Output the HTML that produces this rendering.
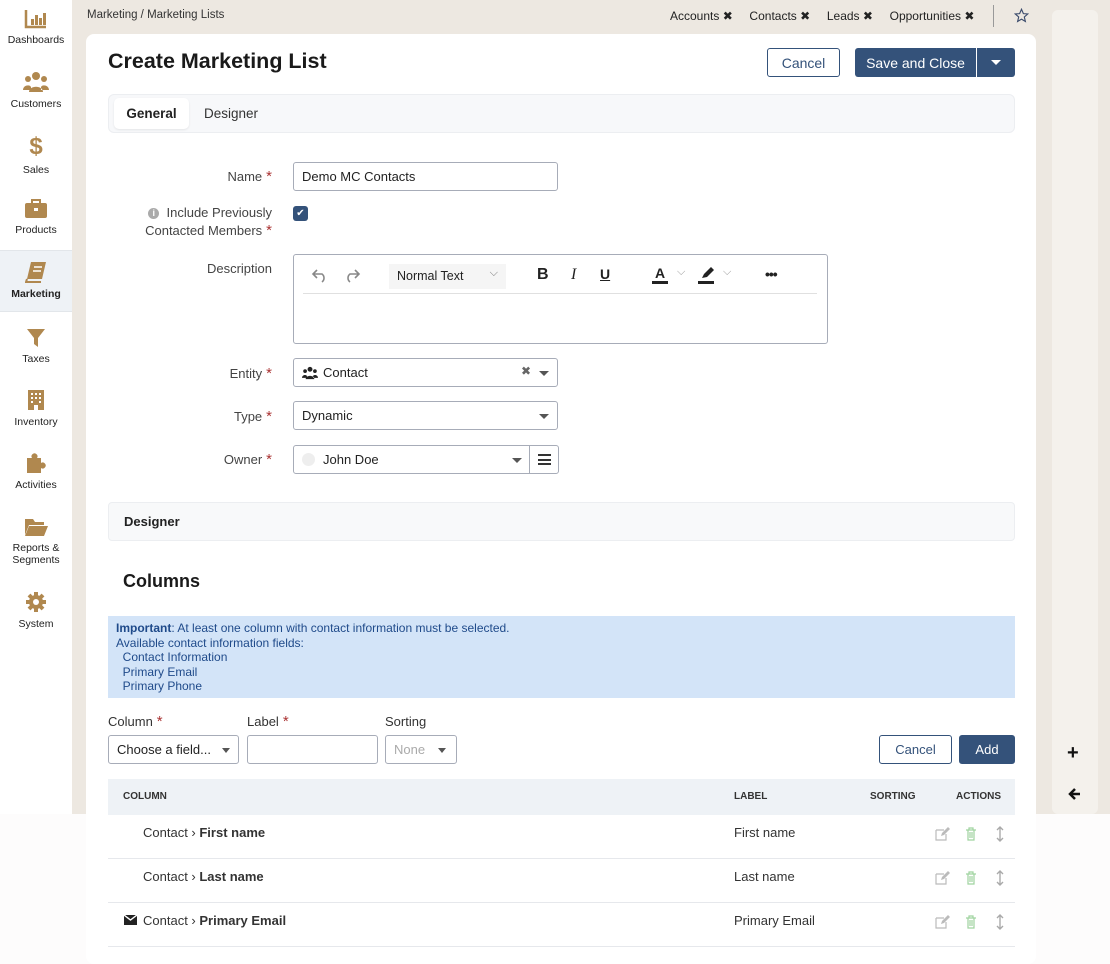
<!DOCTYPE html>
<html><head><meta charset="utf-8">
<style>
*{box-sizing:border-box;margin:0;padding:0}
body{width:1110px;height:949px;background:#fdfcfc;font-family:"Liberation Sans",sans-serif;color:#333;position:relative;overflow:hidden;font-size:13px}
.abs{position:absolute}
#bg{left:0;top:0;width:1110px;height:814px;background:#ede8e1}
#side{left:0;top:0;width:72px;height:814px;background:#fff}
.nav{position:absolute;left:0;width:72px;text-align:center;font-size:10.5px;color:#222}
.nav svg{display:block;margin:0 auto 5px}
#card{left:86px;top:34px;width:950px;height:930px;background:#fff;border-radius:8px}
#rp{left:1052px;top:10px;width:46px;height:804px;background:#f4f1ec;border-radius:6px}
.lbl{position:absolute;text-align:right;font-size:13px;color:#444;width:190px}
.req{color:#a33;font-size:15px;margin-left:4px}
.inp{position:absolute;border:1px solid #a7acb8;border-radius:3px;background:#fff;font-size:13px;color:#222;padding-left:8px;display:flex;align-items:center}
.caret{position:absolute;width:0;height:0;border-left:5px solid transparent;border-right:5px solid transparent;border-top:5px solid #555}
.btn{position:absolute;border-radius:3px;display:flex;align-items:center;justify-content:center;font-size:14px}
.th{position:absolute;font-size:10px;font-weight:bold;color:#333}
.row{position:absolute;left:108px;width:907px;height:44px;border-bottom:1px solid #e6e8ec;font-size:13px}
</style></head><body>
<div id="bg" class="abs"></div>
<div id="side" class="abs"></div>
<div class="abs" style="left:0;top:250px;width:72px;height:62px;background:#eef2f6;border-top:1px solid #e2e6ea;border-bottom:1px solid #e2e6ea"></div>

<div class="nav" style="top:9px"><svg width="24" height="20" viewBox="0 0 24 20"><path d="M2 1v17h20" stroke="#b0884f" stroke-width="2.5" fill="none"/><rect x="7" y="10" width="3" height="6" fill="#b0884f"/><rect x="11" y="6" width="3" height="10" fill="#b0884f"/><rect x="15" y="9" width="3" height="7" fill="#b0884f"/><rect x="19" y="4" width="3" height="12" fill="#b0884f"/></svg>Dashboards</div>
<div class="nav" style="top:71px"><svg width="26" height="22" viewBox="0 0 26 22"><circle cx="13" cy="5" r="4" fill="#b0884f"/><circle cx="5" cy="8" r="3" fill="#b0884f"/><circle cx="21" cy="8" r="3" fill="#b0884f"/><path d="M6 21c0-7 14-7 14 0zM0 19c0-5 7-6 8-3v3zM26 19c0-5-7-6-8-3v3z" fill="#b0884f"/></svg>Customers</div>
<div class="nav" style="top:135px"><div style="font-size:24px;font-weight:bold;color:#b0884f;line-height:24px;margin-bottom:5px">$</div>Sales</div>
<div class="nav" style="top:199px"><svg width="24" height="20" viewBox="0 0 24 20"><rect x="1" y="4" width="22" height="15" rx="2" fill="#b0884f"/><rect x="8" y="1" width="8" height="4" fill="none" stroke="#b0884f" stroke-width="2"/><rect x="10" y="9" width="4" height="3" fill="#fff"/></svg>Products</div>
<div class="nav" style="top:261px;font-weight:bold"><svg width="22" height="22" viewBox="0 0 22 22"><path d="M6 1h15l-4 17H2z" fill="#b0884f"/><path d="M2 18l-1 3h15" stroke="#b0884f" stroke-width="2" fill="none"/><path d="M9 6h8M8 10h8" stroke="#fff" stroke-width="1.5"/></svg>Marketing</div>
<div class="nav" style="top:328px"><svg width="20" height="20" viewBox="0 0 20 20"><path d="M1 1h18l-7 9v9l-4-3v-6z" fill="#b0884f"/></svg>Taxes</div>
<div class="nav" style="top:389px"><svg width="20" height="22" viewBox="0 0 20 22"><rect x="2" y="1" width="16" height="20" fill="#b0884f"/><g fill="#fff"><rect x="5" y="4" width="2" height="2"/><rect x="9" y="4" width="2" height="2"/><rect x="13" y="4" width="2" height="2"/><rect x="5" y="8" width="2" height="2"/><rect x="9" y="8" width="2" height="2"/><rect x="13" y="8" width="2" height="2"/><rect x="5" y="12" width="2" height="2"/><rect x="13" y="12" width="2" height="2"/><rect x="8" y="16" width="4" height="5"/></g></svg>Inventory</div>
<div class="nav" style="top:452px"><svg width="22" height="22" viewBox="0 0 22 22"><path d="M2 6h5a3 3 0 1 1 5 0h4v5a3 3 0 1 1 0 5v5H2z" fill="#b0884f"/></svg>Activities</div>
<div class="nav" style="top:517px"><svg width="24" height="20" viewBox="0 0 24 20"><path d="M1 2h8l2 3h9v3H5L1 18z" fill="#b0884f"/><path d="M5 9h19l-4 10H1z" fill="#b0884f"/></svg>Reports &amp;<br>Segments</div>
<div class="nav" style="top:591px"><svg width="22" height="22" viewBox="0 0 22 22"><circle cx="11" cy="11" r="7" fill="#b0884f"/><g stroke="#b0884f" stroke-width="4"><path d="M11 1v20M1 11h20M4 4l14 14M18 4L4 18"/></g><circle cx="11" cy="11" r="3" fill="#fff"/></svg>System</div>

<div class="abs" style="left:87px;top:9px;font-size:11.5px;color:#333">Marketing / Marketing Lists</div>
<div class="abs" style="left:670px;top:9px;font-size:12px;color:#222;white-space:nowrap;font-family:'Liberation Sans','DejaVu Sans',sans-serif">Accounts <b>✖</b>&nbsp;&nbsp;&nbsp;&nbsp;&nbsp;Contacts <b>✖</b>&nbsp;&nbsp;&nbsp;&nbsp;&nbsp;Leads <b>✖</b>&nbsp;&nbsp;&nbsp;&nbsp;&nbsp;Opportunities <b>✖</b></div>
<div class="abs" style="left:993px;top:5px;width:1px;height:22px;background:#999"></div>
<svg class="abs" style="left:1014px;top:8px" width="15" height="15" viewBox="0 0 24 24"><path d="M12 2l3 7 7 .6-5.5 4.8 1.7 7.2L12 17.8 5.8 21.6l1.7-7.2L2 9.6 9 9z" fill="none" stroke="#3a4a6b" stroke-width="1.8"/></svg>

<div id="rp" class="abs"></div>
<div class="abs" style="left:1067px;top:742px;font-size:20px;font-weight:bold;color:#111">+</div>
<svg class="abs" style="left:1068px;top:787px" width="13" height="14" viewBox="0 0 13 14"><path d="M12 7H3M7 2L2 7l5 5" stroke="#111" stroke-width="2.5" fill="none"/></svg>

<div id="card" class="abs"></div>
<div class="abs" style="left:108px;top:49px;font-size:21.5px;font-weight:bold;color:#1a1a1a">Create Marketing List</div>
<div class="btn" style="left:767px;top:48px;width:73px;height:29px;border:1px solid #34527a;color:#34527a">Cancel</div>
<div class="btn" style="left:855px;top:48px;width:121px;height:29px;background:#34527a;color:#fff;border-radius:3px 0 0 3px">Save and Close</div>
<div class="btn" style="left:977px;top:48px;width:38px;height:29px;background:#34527a;border-radius:0 3px 3px 0"><div class="caret" style="position:static;border-top-color:#fff"></div></div>

<div class="abs" style="left:108px;top:94px;width:907px;height:39px;background:#f7f8fa;border:1px solid #eceef1;border-radius:6px"></div>
<div class="abs" style="left:114px;top:98px;width:75px;height:31px;background:#fff;border-radius:5px;box-shadow:0 1px 2px rgba(0,0,0,.08);font-size:13.5px;font-weight:bold;color:#222;display:flex;align-items:center;justify-content:center">General</div>
<div class="abs" style="left:204px;top:106px;font-size:13.5px;color:#333">Designer</div>

<div class="lbl" style="left:82px;top:168px">Name<span class="req">*</span></div>
<div class="inp" style="left:293px;top:162px;width:265px;height:29px">Demo MC Contacts</div>
<div class="lbl" style="left:82px;top:204px;line-height:18px"><span style="display:inline-block;width:11px;height:11px;border-radius:50%;background:#aaa;color:#fff;font-size:9px;text-align:center;line-height:11px;font-weight:bold;vertical-align:1px">i</span>&nbsp; Include Previously<br>Contacted Members<span class="req">*</span></div>
<div class="abs" style="left:293px;top:206px;width:15px;height:15px;background:#34527a;border-radius:3px;color:#fff;font-size:10px;text-align:center;line-height:15px">✔</div>

<div class="lbl" style="left:82px;top:261px">Description</div>
<div class="abs" style="left:293px;top:254px;width:535px;height:90px;border:1px solid #a7acb8;border-radius:3px"></div>
<div class="abs" style="left:303px;top:293px;width:514px;height:1px;background:#e0e0e0"></div>
<svg class="abs" style="left:311px;top:267px" width="18" height="16" viewBox="0 0 18 16"><path d="M6 3L2 7l4 4M2 7h9a5 5 0 0 1 0 8" stroke="#888" stroke-width="1.6" fill="none"/></svg>
<svg class="abs" style="left:343px;top:267px" width="18" height="16" viewBox="0 0 18 16"><path d="M12 3l4 4-4 4M16 7H7a5 5 0 0 0 0 8" stroke="#888" stroke-width="1.6" fill="none"/></svg>
<div class="abs" style="left:389px;top:264px;width:117px;height:25px;background:#f5f5f5;font-size:12.5px;color:#222;padding:5px 8px">Normal Text<span style="position:absolute;right:8px;top:3px;color:#777;font-size:11px">⌵</span></div>
<div class="abs" style="left:537px;top:266px;font-size:16px;font-weight:bold;color:#222">B</div>
<div class="abs" style="left:571px;top:266px;font-size:16px;font-style:italic;font-family:'Liberation Serif',serif;color:#222">I</div>
<div class="abs" style="left:600px;top:266px;font-size:14px;font-weight:bold;text-decoration:underline;color:#222">U</div>
<div class="abs" style="left:652px;top:266px;font-size:14px;font-weight:bold;color:#222;border-bottom:3px solid #222;line-height:15px;width:16px;text-align:center">A</div>
<div class="abs" style="left:677px;top:266px;color:#999;font-size:11px">⌵</div>
<svg class="abs" style="left:698px;top:266px" width="18" height="18" viewBox="0 0 18 18"><path d="M4 12l2-4 7-7 3 3-7 7z" fill="#222"/><rect x="0" y="15" width="16" height="3" fill="#222"/></svg>
<div class="abs" style="left:723px;top:266px;color:#999;font-size:11px">⌵</div>
<div class="abs" style="left:765px;top:266px;font-size:14px;font-weight:bold;color:#222;letter-spacing:-1px">•••</div>

<div class="lbl" style="left:82px;top:365px">Entity<span class="req">*</span></div>
<div class="inp" style="left:293px;top:358px;width:265px;height:29px"><svg width="16" height="14" viewBox="0 0 26 22" style="margin-right:5px"><circle cx="13" cy="5" r="4" fill="#222"/><circle cx="5" cy="8" r="3" fill="#222"/><circle cx="21" cy="8" r="3" fill="#222"/><path d="M6 21c0-7 14-7 14 0zM0 19c0-5 7-6 8-3v3zM26 19c0-5-7-6-8-3v3z" fill="#222"/></svg>Contact<span style="position:absolute;left:227px;top:5px;font-family:'DejaVu Sans';font-size:12px;color:#666">✖</span><div class="caret" style="left:245px;top:12px"></div></div>
<div class="lbl" style="left:82px;top:408px">Type<span class="req">*</span></div>
<div class="inp" style="left:293px;top:401px;width:265px;height:29px">Dynamic<div class="caret" style="left:245px;top:12px"></div></div>
<div class="lbl" style="left:82px;top:451px">Owner<span class="req">*</span></div>
<div class="inp" style="left:293px;top:445px;width:266px;height:29px"><span style="display:inline-block;width:13px;height:13px;border-radius:50%;background:#eee;margin-right:8px"></span>John Doe<div class="caret" style="left:218px;top:12px"></div><div style="position:absolute;left:235px;top:0;width:1px;height:27px;background:#a7acb8"></div><div style="position:absolute;left:244px;top:8px;width:13px;height:11px;border-top:2px solid #333;border-bottom:2px solid #333"><div style="margin-top:2.5px;height:2px;background:#333"></div></div></div>

<div class="abs" style="left:108px;top:502px;width:907px;height:39px;background:#f8f9fa;border:1px solid #eceef1;border-radius:4px;font-size:13px;font-weight:bold;color:#222;padding:11px 15px">Designer</div>
<div class="abs" style="left:123px;top:571px;font-size:18px;font-weight:bold;color:#1a1a1a">Columns</div>
<div class="abs" style="left:108px;top:616px;width:907px;height:82px;background:#d3e4f8;color:#1f4a8a;font-size:12px;line-height:14.5px;padding:5px 8px"><b>Important</b>: At least one column with contact information must be selected.<br>Available contact information fields:<br>&nbsp;&nbsp;Contact Information<br>&nbsp;&nbsp;Primary Email<br>&nbsp;&nbsp;Primary Phone</div>

<div class="abs" style="left:108px;top:713px;font-size:13px;color:#333">Column<span class="req">*</span></div>
<div class="abs" style="left:247px;top:713px;font-size:13px;color:#333">Label<span class="req">*</span></div>
<div class="abs" style="left:385px;top:714px;font-size:13px;color:#333">Sorting</div>
<div class="inp" style="left:108px;top:735px;width:131px;height:29px;font-size:13px">Choose a field...<div class="caret" style="left:113px;top:12px;border-width:5px 4px 0"></div></div>
<div class="inp" style="left:247px;top:735px;width:131px;height:29px"></div>
<div class="inp" style="left:385px;top:735px;width:72px;height:29px;color:#aaa">None<div class="caret" style="left:52px;top:12px;border-width:5px 4px 0"></div></div>
<div class="btn" style="left:879px;top:735px;width:73px;height:29px;border:1px solid #34527a;color:#34527a;font-size:13px">Cancel</div>
<div class="btn" style="left:959px;top:735px;width:56px;height:29px;background:#34527a;color:#fff;font-size:13px">Add</div>

<div class="abs" style="left:108px;top:779px;width:907px;height:36px;background:#eef2f6"></div>
<div class="th" style="left:123px;top:791px">COLUMN</div>
<div class="th" style="left:734px;top:791px">LABEL</div>
<div class="th" style="left:870px;top:791px">SORTING</div>
<div class="th" style="left:956px;top:791px">ACTIONS</div>

<div class="row" style="top:815px"></div>
<div class="row" style="top:859px"></div>
<div class="row" style="top:903px"></div>
<div class="abs" style="left:143px;top:825px">Contact › <b>First name</b></div>
<div class="abs" style="left:734px;top:825px">First name</div>
<div class="abs" style="left:143px;top:869px">Contact › <b>Last name</b></div>
<div class="abs" style="left:734px;top:869px">Last name</div>
<div class="abs" style="left:124px;top:915px;width:13px;height:10px;background:#222"><svg width="13" height="10" viewBox="0 0 13 10" style="display:block"><path d="M0 0l6.5 5L13 0" stroke="#fff" stroke-width="1.4" fill="none"/></svg></div>
<div class="abs" style="left:143px;top:913px">Contact › <b>Primary Email</b></div>
<div class="abs" style="left:734px;top:913px">Primary Email</div>

<svg class="abs" style="left:935px;top:826px" width="72" height="104" viewBox="0 0 72 104">
<g id="a"><path d="M1 4h8M1 4v10h10V8" stroke="#bbb" stroke-width="1.2" fill="none"/><path d="M6 10l1-3 6-6 2 2-6 6z" fill="#bbb"/><path d="M31 4h10M33 4v10h6V4M35 6v6M37 6v6M34 4V2h4v2" stroke="#9fd39f" stroke-width="1.2" fill="none"/><path d="M65 1v14M62 4l3-3 3 3M62 12l3 3 3-3" stroke="#aaa" stroke-width="1.4" fill="none"/></g>
<use href="#a" y="44"/><use href="#a" y="88"/>
</svg>
</body></html>
